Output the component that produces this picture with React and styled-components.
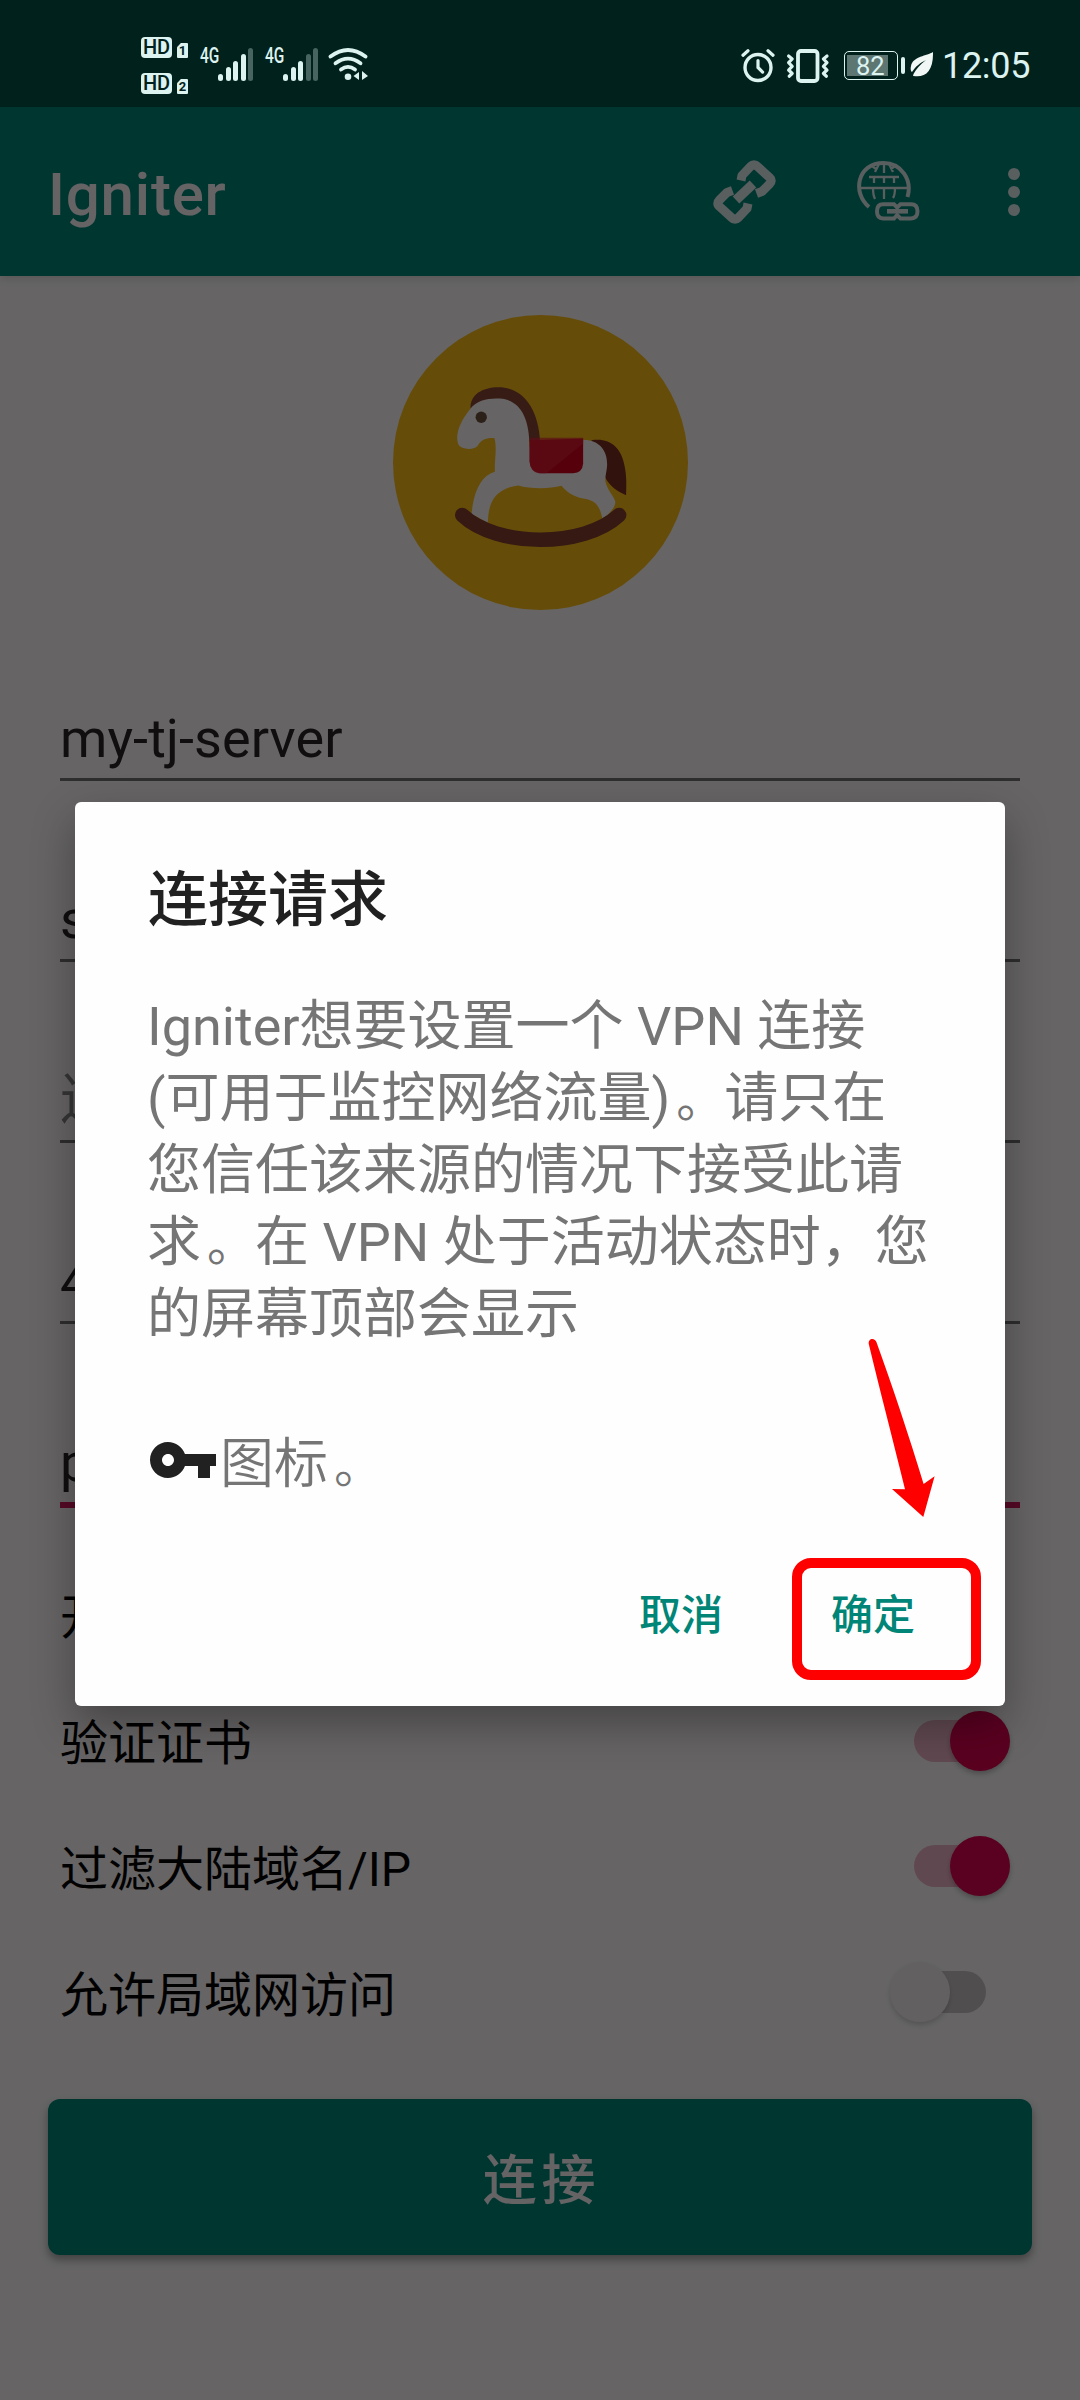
import React from "react";
import styled, { createGlobalStyle } from "styled-components";

const GlobalStyle = createGlobalStyle`
  * { box-sizing: border-box; }
  html, body { margin: 0; padding: 0; }
  body { width: 1080px; height: 2400px; overflow: hidden; background: #656464; }
`;

const LATIN = `Roboto, "Noto Sans CJK SC", sans-serif`;
const CJK = `"Noto Sans CJK SC", Roboto, sans-serif`;
const INK = "#dcf3f0";

const Screen = styled.div`
  position: relative;
  width: 1080px;
  height: 2400px;
  overflow: hidden;
  display: flex;
  flex-direction: column;
  background: #fefbfb;
  font-family: ${LATIN};
`;

/* ---------- status bar ---------- */
const StatusBar = styled.header`
  position: relative;
  z-index: 2;
  flex: none;
  height: 107px;
  padding: 37px 48px 0 141px;
  display: flex;
  justify-content: space-between;
  background: #00211c;
  color: ${INK};
`;
const StatusGroup = styled.div`
  display: flex;
  align-items: flex-start;
`;
const HdColumn = styled.div`
  display: flex;
  flex-direction: column;
  gap: 15px;
  width: 59px;
`;
const HdRow = styled.div`
  display: flex;
  align-items: flex-end;
  gap: 5px;
  height: 21px;
`;
const HdBadge = styled.span`
  width: 31px;
  height: 21px;
  border-radius: 4px;
  background: ${INK};
  color: #00211c;
  font: 500 20px/21px ${LATIN};
  text-align: center;
`;
const SimBadge = styled.span`
  width: 11px;
  height: 15px;
  border-radius: 1px;
  clip-path: polygon(35% 0, 100% 0, 100% 100%, 0 100%, 0 28%);
  background: ${INK};
  color: #00211c;
  font: 700 13px/16px ${LATIN};
  text-align: center;
`;
const Signal = styled.div`
  display: flex;
  width: 65px;
  padding-top: 11px;
`;
const NetLabel = styled.span`
  width: 18px;
  height: 17px;
  font: 500 21.5px/16px ${LATIN};
  transform: scaleX(0.72);
  transform-origin: 0 0;
  white-space: nowrap;
`;
const Bars = styled.div`
  display: flex;
  align-items: flex-end;
  gap: 2.5px;
  height: 33px;
`;
const Bar = styled.i`
  width: 5px;
  height: ${(p) => p.$h}px;
  border-radius: 2.5px;
  background: ${INK};
  opacity: ${(p) => (p.$dim ? 0.32 : 1)};
`;
const StatusIcon = styled.svg`
  display: block;
  flex: none;
  margin-top: ${(p) => p.$top}px;
  margin-left: ${(p) => p.$left || 0}px;
`;
const Battery = styled.div`
  display: flex;
  align-items: center;
  gap: 3px;
  margin: 14px 0 0 14px;
`;
const BatteryBody = styled.div`
  width: 54px;
  height: 29px;
  padding: 2.5px;
  border: 1.5px solid ${INK};
  border-radius: 5px;
`;
const BatteryFill = styled.div`
  width: 41px;
  height: 21px;
  background: #5d7672;
  font: 400 25.5px/22px ${LATIN};
  text-indent: 9px;
  white-space: nowrap;
`;
const BatteryNub = styled.i`
  width: 4px;
  height: 17px;
  border-radius: 2px;
  background: ${INK};
`;
const Clock = styled.span`
  margin: 8px 0 0 8px;
  width: 90px;
  font: 400 36px/42px ${LATIN};
  letter-spacing: -0.3px;
`;

/* ---------- app bar ---------- */
const AppBar = styled.div`
  flex: none;
  height: 169px;
  padding: 0 60px 0 48px;
  display: flex;
  align-items: center;
  background: #008779;
  color: #fdf8fb;
  box-shadow: 0 3px 8px rgba(0, 0, 0, 0.12);
`;
const AppTitle = styled.h1`
  flex: 1;
  margin: 6px 0 0;
  font: 500 60px/72px ${LATIN};
  letter-spacing: 0.8px;
`;
const BarIcon = styled.svg`
  display: block;
  flex: none;
  margin-right: ${(p) => p.$gap}px;
  opacity: 0.88;
`;

/* ---------- form ---------- */
const Form = styled.main`
  display: flex;
  flex-direction: column;
  padding: 39px 48px 0;
`;
const Logo = styled.svg`
  display: block;
  align-self: center;
  margin-bottom: 25px;
`;
const Fields = styled.div`
  height: 917px;
`;
const Field = styled.div`
  height: ${(p) => (p.$first ? 147 : p.$focused ? 183 : 181)}px;
  margin: 0 12px;
  padding-bottom: ${(p) => (p.$focused ? 0 : 1)}px;
  display: flex;
  flex-direction: column;
  justify-content: flex-end;
  font: 400 54px/64px ${LATIN};
  letter-spacing: 0.1px;
  color: ${(p) => (p.$hint ? "#8a8788" : "#2a2526")};
`;
const FieldText = styled.span`
  padding-bottom: 7px;
`;
const FieldLine = styled.i`
  height: ${(p) => (p.$focused ? 6 : 3)}px;
  background: ${(p) => (p.$focused ? "#d81b60" : "#777374")};
`;
const SwitchRow = styled.label`
  display: flex;
  align-items: center;
  justify-content: space-between;
  height: 125.8px;
  padding: 0 22px 0 12px;
`;
const SwitchLabel = styled.span`
  padding-top: 7px;
  font: 400 48px/60px ${LATIN};
  color: #060304;
`;
const Track = styled.span`
  display: flex;
  align-items: center;
  justify-content: ${(p) => (p.$on ? "flex-end" : "flex-start")};
  width: 72px;
  height: 42px;
  margin-right: 24px;
  border-radius: 21px;
  background: ${(p) => (p.$on ? "#f0b4c9" : "#c9c4c5")};
`;
const Thumb = styled.i`
  flex: none;
  width: 60px;
  height: 60px;
  margin: 0 -24px;
  border-radius: 50%;
  background: ${(p) => (p.$on ? "#e10050" : "#f5f0f1")};
  box-shadow: 0 3px 5px rgba(0, 0, 0, ${(p) => (p.$on ? 0.24 : 0.16)});
`;
const ConnectButton = styled.button`
  height: 156px;
  margin-top: 44px;
  padding: 9px 0 0 3px;
  border: 0;
  border-radius: 12px;
  background: #008779;
  color: #fdf8fb;
  font: 500 54px/80px ${LATIN};
  letter-spacing: 4.8px;
  box-shadow: 0 5px 9px rgba(0, 0, 0, 0.35);
`;

/* ---------- dialog ---------- */
const Scrim = styled.div`
  position: absolute;
  inset: 0;
  z-index: 1;
  padding: 802px 75px 0;
  background: rgba(0, 0, 0, 0.6);
`;
const Dialog = styled.section`
  position: relative;
  height: 904px;
  padding: 51px 72px 0;
  border-radius: 6px;
  background: #fefefe;
  box-shadow: 0 18px 44px rgba(0, 0, 0, 0.32);
`;
const DialogTitle = styled.h2`
  margin: 0;
  padding-left: 1px;
  color: #212121;
  font: 500 60px/84px ${CJK};
`;
const DialogText = styled.div`
  margin: 54px 0 0;
  color: #757575;
  font: 400 54px/72px ${LATIN};
`;
const TextLine = styled.div`
  height: 72px;
  white-space: pre;
`;
const Stop = styled.span`
  padding-left: 6px;
  font-size: 48px;
`;
const IconLine = styled.div`
  display: flex;
  align-items: baseline;
  height: 72px;
  margin-top: 73px;
  color: #757575;
  font: 350 54px/72px ${CJK};
`;
const KeySvg = styled.svg`
  display: block;
  flex: none;
  align-self: center;
`;
const Actions = styled.div`
  display: flex;
  justify-content: flex-end;
  gap: 108px;
  margin-top: 86px;
  padding-right: 18px;
`;
const Action = styled.button`
  padding: 0;
  border: 0;
  background: none;
  color: #008577;
  font: 500 42px/60px ${CJK};
`;
const Highlight = styled.div`
  position: absolute;
  left: 717px;
  top: 756px;
  width: 189px;
  height: 122px;
  border: 10px solid #ff0000;
  border-radius: 19px;
`;
const Arrow = styled.svg`
  position: absolute;
  left: 785px;
  top: 528px;
`;

function SignalMeter({ level }) {
  return (
    <Signal>
      <NetLabel>4G</NetLabel>
      <Bars>
        {[7, 14, 20, 27, 33].map((h, i) => (
          <Bar key={h} $h={h} $dim={i >= level} />
        ))}
      </Bars>
    </Signal>
  );
}

function WifiIcon() {
  return (
    <StatusIcon $top={11} $left={-2} width="40" height="34" viewBox="0 0 40 34" fill="none" stroke={INK} strokeWidth="3.8" strokeLinecap="round">
      <path d="M2.5 8.6Q20-4.5 37.5 8.6" />
      <path d="M7.5 15.3Q20 6 32.5 15.3" />
      <path d="M13 21.5Q20 16.3 27 21.5" />
      <circle cx="20" cy="28.8" r="3.3" fill={INK} stroke="none" />
      <path d="M31 24v8l-5.5-4zM34 23l6 5-6 4z" fill={INK} stroke="none" />
    </StatusIcon>
  );
}

function AlarmIcon() {
  return (
    <StatusIcon $top={12} width="34" height="34" viewBox="0 0 34 34" fill="none" stroke={INK} strokeLinecap="round">
      <circle cx="17" cy="18.5" r="13" strokeWidth="3.4" />
      <path d="M17 11.5v7l4.6 4.6" strokeWidth="3.2" />
      <path d="M2 6.3L7 1.8M27 1.8l5 4.5" strokeWidth="3.2" />
    </StatusIcon>
  );
}

function VibrateIcon() {
  return (
    <StatusIcon $top={12} $left={10.5} width="44" height="34" viewBox="0 0 44 34" fill="none" stroke={INK} strokeWidth="3.8" strokeLinejoin="round" strokeLinecap="round">
      <rect x="12" y="2" width="19.5" height="30" rx="3" />
      <path d="M2.6 7l3.6 3-3.6 3.7 3.6 3.6-3.6 3.7 3.6 3.5-3 2.7" strokeWidth="3.2" />
      <path d="M41 7l-3.6 3 3.6 3.7-3.6 3.6 3.6 3.7-3.6 3.5 3 2.7" strokeWidth="3.2" />
    </StatusIcon>
  );
}

function LeafIcon() {
  return (
    <StatusIcon $top={15} $left={5.5} width="24" height="25" viewBox="0 0 24 25">
      <path d="M23 0C17 4 3 4 1 14c-.7 3-.3 5 1 6C6 14 10 11 16 8 10 13 6 17 3.500 22c0 1-1 2 0 2 12 2 20-5 19.500-24z" fill="#f0f7f4" />
    </StatusIcon>
  );
}

function LinkIcon() {
  return (
    <BarIcon $gap={81} width="63" height="64" viewBox="0 0 63 64" fill="none" stroke="#fdf8fb" strokeWidth="9" strokeLinejoin="round">
      <path d="M28 20.500L29 15.500L37.500 6.500Q41 3 44.500 6.500L56.500 17.500Q60 20.500 56.500 24L49 31.500L43.500 33.500" />
      <path d="M35 43.500L34 48.500L25.500 57.500Q22 61 18.500 57.500L6.500 46.500Q3 43.500 6.500 40L14 32.500L19.500 30.500" />
      <path d="M23 40L40 24" strokeWidth="9.500" />
    </BarIcon>
  );
}

function GlobeLinkIcon() {
  return (
    <BarIcon $gap={88} width="63" height="61" viewBox="0 0 63 61" fill="none" stroke="#fdf8fb" strokeWidth="2.300">
      <path d="M12 46C-5 32 0 2 26.500 2c18 0 29 17 24 34" strokeWidth="4" />
      <path d="M3 27h47M12 16h30M17 16v6M27 16v6M37 16v6M16 27q0 7 2 11M27 27v11M38 27q0 7-2 10" />
      <path d="M27 3v9M22 3l-4 8M32 3l4 8M15 5l4 3M38 5l-4 3" />
      <path d="M41 47.500L37 43.200H26Q20 43.200 20 50.300T26 57.500H37L41 53M39 47.500L43.500 43.200H54Q60.500 43.200 60.500 50.300T54 57.500H43.500L39 53" strokeWidth="4" />
      <path d="M30 50.300h21" strokeWidth="4.600" />
    </BarIcon>
  );
}

function MoreIcon() {
  return (
    <BarIcon $gap={0} width="12" height="48" viewBox="0 0 12 48" fill="#fdf8fb">
      <circle cx="6" cy="6" r="6" />
      <circle cx="6" cy="24" r="6" />
      <circle cx="6" cy="42" r="6" />
    </BarIcon>
  );
}

function HorseLogo() {
  return (
    <Logo width="295" height="295" viewBox="39 44 886 886">
      <circle cx="482" cy="487" r="443" fill="#ffbe18" />
      <path d="M272 325C270 285 305 261 356 261C430 261 476 325 481 425L450 425L400 320Z" fill="#8a4635" />
      <path d="M635 420C690 412 725 440 735 500C741 530 740 560 739 585C715 575 690 560 675 530Z" fill="#7b2e22" />
      <path d="M272 325C290 300 325 293 360 295C420 300 449 350 449 440L610 440L610 420C650 417 682 445 682 490C683 510 675 525 677 545C685 575 705 590 707 607C705 625 685 645 668 655C660 620 650 600 610 595C580 590 560 575 545 557C510 567 450 567 415 556C350 565 325 600 324 668L275 642C280 590 295 530 345 515C343 480 352 450 344 414C320 412 305 418 294 436C285 450 245 450 236 434C225 410 235 370 272 325Z" fill="#fffafa" />
      <path d="M449 420L610 415L610 490Q608 518 580 519L480 519Q452 516 449 485Z" fill="#d4001c" />
      <path d="M450 413H610V430L500 519H475Q450 514 450 485Z" fill="#e8243a" opacity=".65" />
      <circle cx="304" cy="351" r="17" fill="#6d5340" />
      <path d="M247 645C350 742 610 745 718 645" fill="none" stroke="#85402f" strokeWidth="44" strokeLinecap="round" />
    </Logo>
  );
}

function KeyIcon() {
  return (
    <KeySvg width="73" height="72" viewBox="0 0 24.333 24" fill="#212121">
      <path d="M12.650 10C11.830 7.670 9.610 6 7 6c-3.310 0-6 2.690-6 6s2.690 6 6 6c2.610 0 4.830-1.670 5.650-4H17v4h4v-4h2v-4H12.650zM7 14c-1.100 0-2-.9-2-2s.9-2 2-2 2 .9 2 2-.9 2-2 2z" />
    </KeySvg>
  );
}

const fields = [
  { text: "my-tj-server" },
  { text: "s" },
  { text: "连", hint: true },
  { text: "4" },
  { text: "p", focused: true },
];

const switches = [
  { label: "开", on: false },
  { label: "验证证书", on: true },
  { label: "过滤大陆域名/IP", on: true },
  { label: "允许局域网访问", on: false },
];

export default function App() {
  return (
    <Screen>
      <GlobalStyle />
      <StatusBar>
        <StatusGroup>
          <HdColumn>
            {[1, 2].map((n) => (
              <HdRow key={n}>
                <HdBadge>HD</HdBadge>
                <SimBadge>{n}</SimBadge>
              </HdRow>
            ))}
          </HdColumn>
          <SignalMeter level={4} />
          <SignalMeter level={3} />
          <WifiIcon />
        </StatusGroup>
        <StatusGroup>
          <AlarmIcon />
          <VibrateIcon />
          <Battery>
            <BatteryBody>
              <BatteryFill>82</BatteryFill>
            </BatteryBody>
            <BatteryNub />
          </Battery>
          <LeafIcon />
          <Clock>12:05</Clock>
        </StatusGroup>
      </StatusBar>

      <AppBar>
        <AppTitle>Igniter</AppTitle>
        <LinkIcon />
        <GlobeLinkIcon />
        <MoreIcon />
      </AppBar>

      <Form>
        <HorseLogo />
        <Fields>
          {fields.map((f, i) => (
            <Field key={f.text} $first={i === 0} $hint={f.hint} $focused={f.focused}>
              <FieldText>{f.text}</FieldText>
              <FieldLine $focused={f.focused} />
            </Field>
          ))}
        </Fields>
        {switches.map((s) => (
          <SwitchRow key={s.label}>
            <SwitchLabel>{s.label}</SwitchLabel>
            <Track $on={s.on}>
              <Thumb $on={s.on} />
            </Track>
          </SwitchRow>
        ))}
        <ConnectButton>连接</ConnectButton>
      </Form>

      <Scrim>
        <Dialog>
          <DialogTitle>连接请求</DialogTitle>
          <DialogText>
            <TextLine>Igniter想要设置一个 VPN 连接</TextLine>
            <TextLine>
              (可用于监控网络流量)<Stop>。</Stop>请只在
            </TextLine>
            <TextLine>您信任该来源的情况下接受此请</TextLine>
            <TextLine>
              求<Stop>。</Stop>在 VPN 处于活动状态时，您
            </TextLine>
            <TextLine>的屏幕顶部会显示</TextLine>
          </DialogText>
          <IconLine>
            <KeyIcon />
            <span>图标</span>
            <Stop>。</Stop>
          </IconLine>
          <Actions>
            <Action>取消</Action>
            <Action>确定</Action>
          </Actions>
          <Highlight />
          <Arrow width="80" height="190" viewBox="860 1330 80 190">
            <path d="M868.900 1344.500C867.500 1338 875 1337 876.600 1342.500C893 1388 909 1436 923.600 1484L934.600 1476.300L923.300 1517L892 1489L905 1489.300C893 1440 880 1391 868.900 1344.500Z" fill="#ff0000" />
          </Arrow>
        </Dialog>
      </Scrim>
    </Screen>
  );
}
